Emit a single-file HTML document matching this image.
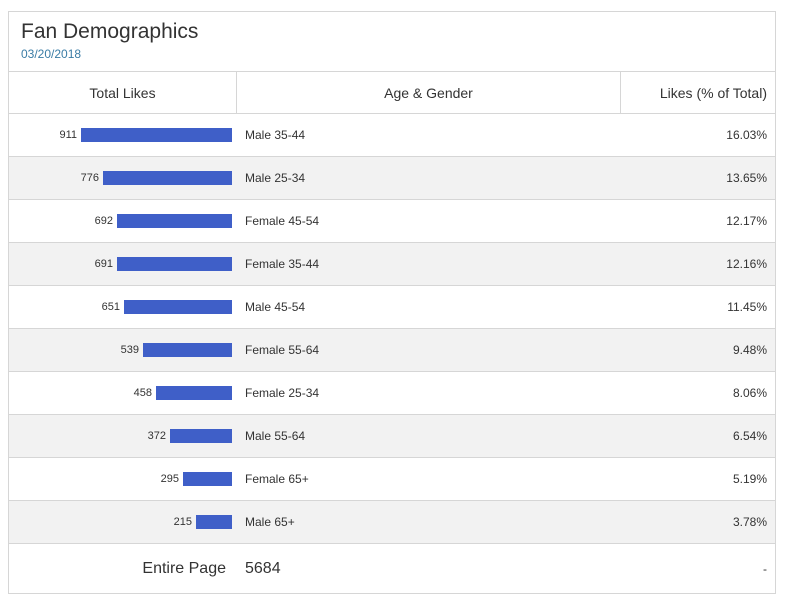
<!DOCTYPE html>
<html><head><style>
body{margin:0;background:#fff;font-family:"Liberation Sans",sans-serif;color:#333;}
.box{position:absolute;left:8px;top:11px;width:766px;height:581px;border:1px solid #d6d6d6;}
.t{position:absolute;left:12px;top:8px;font-size:21px;color:#333;}
.d{position:absolute;left:12px;top:35px;font-size:12px;color:#3a7ca5;}
.row{position:absolute;left:0;width:766px;border-top:1px solid #d6d6d6;}
.c{position:absolute;top:0;height:100%;display:flex;align-items:center;font-size:12px;}
.bar{display:inline-block;height:14px;background:#3f5fc8;margin-left:4px;}
</style></head><body><div class="box">
<div class="t">Fan Demographics</div><div class="d">03/20/2018</div>
<div class="row" style="top:59px;height:42px;">
<div class="c" style="left:0;width:227px;justify-content:center;font-size:14px;">Total Likes</div>
<div class="c" style="left:227px;width:383px;justify-content:center;font-size:14px;border-left:1px solid #d6d6d6;border-right:1px solid #d6d6d6;">Age &amp; Gender</div>
<div class="c" style="left:612px;width:146px;justify-content:flex-end;font-size:14px;">Likes (% of Total)</div>
</div>
<div id="rows"></div>
<div class="row" style="top:531px;height:50px;">
<div class="c" style="left:0;width:217px;justify-content:flex-end;font-size:16px;">Entire Page</div>
<div class="c" style="left:236px;font-size:16px;">5684</div>
<div class="c" style="left:612px;width:146px;justify-content:flex-end;">-</div>
</div>
</div>
<script>
var d=[[911,"Male 35-44","16.03%"],[776,"Male 25-34","13.65%"],[692,"Female 45-54","12.17%"],[691,"Female 35-44","12.16%"],[651,"Male 45-54","11.45%"],[539,"Female 55-64","9.48%"],[458,"Female 25-34","8.06%"],[372,"Male 55-64","6.54%"],[295,"Female 65+","5.19%"],[215,"Male 65+","3.78%"]];
var h="";d.forEach(function(r,i){var w=Math.round(r[0]*151/911);
h+='<div class="row" style="top:'+(101+i*43)+'px;height:42px;background:'+(i%2?'#f2f2f2':'#fff')+'"><div class="c" style="left:0;width:223px;justify-content:flex-end;font-size:11px;">'+r[0]+'<span class="bar" style="width:'+w+'px"></span></div><div class="c" style="left:236px;">'+r[1]+'</div><div class="c" style="left:612px;width:146px;justify-content:flex-end;">'+r[2]+'</div></div>';});
document.getElementById("rows").innerHTML=h;
</script>
</body></html>
